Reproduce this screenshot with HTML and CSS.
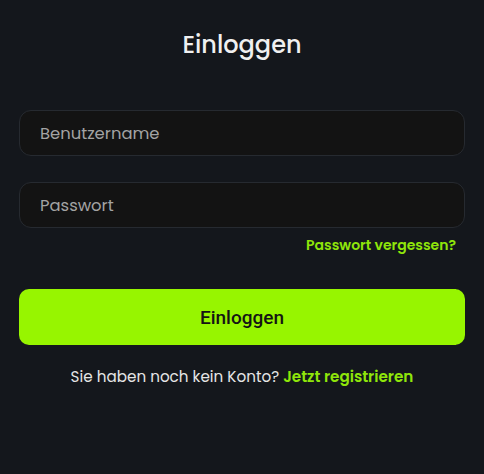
FILE: index.html
```html
<!DOCTYPE html>
<html lang="de">
<head>
    <meta charset="UTF-8">
    <meta name="viewport" content="width=device-width, initial-scale=1.0">
    <title>Einloggen</title>
    <link rel="stylesheet" href="styles.css">
</head>
<body>
<div class="login-container">
    <h1 class="login-title">Einloggen</h1>
    <form class="login-form" action="/login" method="post">
        <div class="form-group">
            <input type="text" name="username" placeholder="Benutzername">
        </div>
        <div class="form-group">
            <input type="password" name="password" placeholder="Passwort">
        </div>
        <div class="forgot-row">
            <a href="#" class="forgot-link">Passwort vergessen?</a>
        </div>
        <button type="submit" class="btn-login">Einloggen</button>
    </form>
    <p class="register-text">Sie haben noch kein Konto? <a href="#" class="register-link">Jetzt registrieren</a></p>
</div>
</body>
</html>
```

FILE: styles.css
```css
* {
    margin: 0;
    padding: 0;
    box-sizing: border-box;
    font-family: 'Poppins', 'Open Sans', 'Noto Sans', sans-serif;
}

body {
    min-height: 100vh;
    background-color: #14171c;
    color: #e6e6e6;
}

.login-container {
    padding: 29px 19px;
}

.login-title {
    text-align: center;
    font-size: 24px;
    font-weight: 500;
    color: #f0f0f0;
    line-height: 32px;
    margin-bottom: 49px;
}

.form-group {
    margin-bottom: 26px;
}

.form-group input {
    width: 100%;
    height: 46px;
    padding: 0 20px;
    background-color: #131313;
    border: 1px solid #262a30;
    border-radius: 12px;
    color: #e6e6e6;
    font-size: 16.4px;
    outline: none;
}

.form-group input::placeholder {
    color: #a3a3a3;
}

.forgot-row {
    text-align: right;
    margin-top: -19px;
    padding-right: 9px;
    line-height: 20px;
}

.forgot-link {
    color: #8fe60a;
    font-size: 14px;
    font-weight: 600;
    text-decoration: none;
}

.btn-login {
    display: block;
    width: 100%;
    height: 56px;
    margin-top: 34px;
    border: none;
    border-radius: 10px;
    background-color: #97f500;
    color: #141414;
    font-family: Roboto, sans-serif;
    font-size: 19px;
    font-weight: 500;
    cursor: pointer;
}

.register-text {
    text-align: center;
    margin-top: 20px;
    font-size: 15.2px;
    line-height: 24px;
    color: #e6e6e6;
}

.register-link {
    color: #8fe60a;
    font-weight: 600;
    text-decoration: none;
}
```
